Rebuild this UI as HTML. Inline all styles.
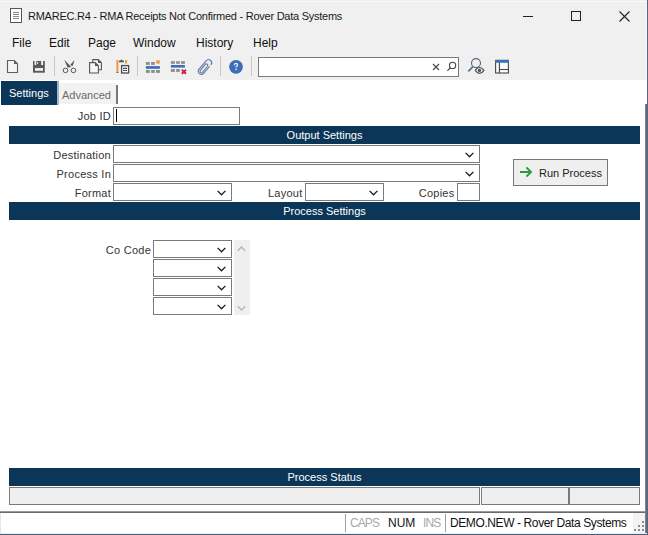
<!DOCTYPE html>
<html><head><meta charset="utf-8">
<style>
*{margin:0;padding:0;box-sizing:border-box}
html,body{width:648px;height:535px;overflow:hidden;background:#fff}
body{position:relative;font-family:"Liberation Sans",sans-serif;color:#222}
.a{position:absolute}
.t{position:absolute;white-space:pre;line-height:1}
#titlebar{left:0;top:0;width:648px;height:32px;background:#f0f0f0}
#menubar{left:0;top:32px;width:648px;height:23px;background:#f0f0f0}
#toolbar{left:0;top:55px;width:648px;height:25px;background:#f0f0f0}
.sep{position:absolute;top:56px;width:1px;height:20px;background:#c8c8c8}
.hdr{position:absolute;left:9px;width:631px;height:18px;background:#0c3657;color:#fff;font-size:11px;text-align:center;line-height:18px}
.lbl{position:absolute;font-size:11px;color:#333;text-align:right;white-space:pre;line-height:1;letter-spacing:0.25px;margin-right:-0.5px}
.inp{position:absolute;border:1px solid #7a7a7a;background:#fff;height:18px}
.chev{position:absolute;width:9px;height:6px}
.sf{position:absolute;top:487px;height:18px;border:1px solid #7a7a7a;background:#efefef}
</style></head><body>

<!-- window border -->
<div class="a" style="left:0;top:0;width:648px;height:1px;background:#5a6a80"></div>

<div id="titlebar" class="a"></div>
<div class="a" style="left:0;top:1px;width:646px;height:1px;background:#f8f8fb"></div>
<!-- doc icon -->
<svg class="a" style="left:10px;top:8px" width="13" height="16" viewBox="0 0 13 16">
 <rect x="0.5" y="0.5" width="11" height="14" fill="#fff" stroke="#555" stroke-width="1"/>
 <path d="M3 4.5H9M3 6.5H9M3 8.5H9M3 10.5H9" stroke="#888" stroke-width="1"/>
</svg>
<div class="t" style="left:28px;top:11px;font-size:11px;letter-spacing:-0.25px;color:#1a1a1a">RMAREC.R4 - RMA Receipts Not Confirmed - Rover Data Systems</div>
<!-- window controls -->
<div class="a" style="left:523px;top:16px;width:10px;height:1px;background:#222"></div>
<div class="a" style="left:571px;top:11px;width:10px;height:10px;border:1px solid #222"></div>
<svg class="a" style="left:619px;top:11px" width="11" height="11" viewBox="0 0 11 11"><path d="M0.5 0.5L10.5 10.5M10.5 0.5L0.5 10.5" stroke="#222" stroke-width="1.1"/></svg>

<div id="menubar" class="a"></div>
<div class="t" style="left:12px;top:37px;font-size:12px;color:#111">File</div>
<div class="t" style="left:49px;top:37px;font-size:12px;color:#111">Edit</div>
<div class="t" style="left:88px;top:37px;font-size:12px;color:#111">Page</div>
<div class="t" style="left:133px;top:37px;font-size:12px;color:#111">Window</div>
<div class="t" style="left:196px;top:37px;font-size:12px;color:#111">History</div>
<div class="t" style="left:253px;top:37px;font-size:12px;color:#111">Help</div>

<div id="toolbar" class="a"></div>
<!-- new -->
<svg class="a" style="left:6px;top:59px" width="14" height="15" viewBox="0 0 14 15">
 <path d="M1.5 1.5H8.3L11.5 4.7V13.5H1.5Z" fill="#f4f4f4" stroke="#5e5e5e" stroke-width="1.1"/>
 <path d="M8 1.2L11.8 5H8Z" fill="#5e5e5e"/>
</svg>
<!-- save -->
<svg class="a" style="left:32px;top:60px" width="14" height="14" viewBox="0 0 14 14">
 <rect x="1" y="1" width="11.8" height="11.7" fill="#5a5a5a"/>
 <rect x="2.5" y="1" width="1.7" height="4" fill="#f0f0f0"/>
 <rect x="9.1" y="1" width="2" height="4" fill="#f0f0f0"/>
 <rect x="4.9" y="2" width="1.2" height="1.7" fill="#f0f0f0"/>
 <rect x="3" y="8.1" width="8" height="2.7" fill="#f4f4f4"/>
</svg>
<div class="sep" style="left:54px"></div>
<!-- cut -->
<svg class="a" style="left:58px;top:56px" width="22" height="20" viewBox="0 0 22 20">
 <path d="M6.3 3.8L13.2 11L9.6 11.4Z" fill="#555"/>
 <path d="M16.6 4L14.6 9.9L12.2 8.9Z" fill="#555"/>
 <circle cx="7.5" cy="14.4" r="2.3" fill="none" stroke="#555" stroke-width="1"/>
 <circle cx="15.4" cy="14.4" r="2.3" fill="none" stroke="#555" stroke-width="1"/>
</svg>
<!-- copy -->
<svg class="a" style="left:85px;top:55px" width="22" height="21" viewBox="0 0 22 21">
 <path d="M7.8 4.6H13.2L16.4 7.8V14.8H7.8Z" fill="#f4f4f4" stroke="#555" stroke-width="1.1"/>
 <path d="M13 4.3L16.7 8H13Z" fill="#555"/>
 <path d="M4.6 7.6H10.2L13.4 10.8V18H4.6Z" fill="#f4f4f4" stroke="#555" stroke-width="1.1"/>
 <path d="M10 7.3L13.7 11H10Z" fill="#555"/>
</svg>
<!-- paste -->
<svg class="a" style="left:111px;top:55px" width="22" height="21" viewBox="0 0 22 21">
 <path d="M6.4 5V17.8" fill="none" stroke="#ee9a3a" stroke-width="2"/><rect x="5.4" y="17" width="2" height="0.9" fill="#6a6a6a"/>
 <path d="M15.1 5V8.6" fill="none" stroke="#ee9a3a" stroke-width="2"/>
 <path d="M8 7.3V6.1C8 5.6 8.5 5.4 9 5.4H9.6C9.9 4.6 10.3 4.4 10.5 4.4C10.8 4.4 11.2 4.6 11.4 5.4H12.2C12.7 5.4 13 5.7 13 6.1V7.3Z" fill="#555"/>
 <rect x="10.6" y="10.6" width="7" height="7.4" fill="#fafafa" stroke="#4a4a4a" stroke-width="1.3"/>
 <path d="M12 13.4H16M12 15.5H16" stroke="#4a4a4a" stroke-width="1.1"/>
</svg>
<div class="sep" style="left:137px"></div>
<!-- insert row -->
<svg class="a" style="left:141px;top:55px" width="22" height="22" viewBox="0 0 22 22">
 <rect x="4.9" y="7" width="3.9" height="2.9" fill="#8e8e8e"/><rect x="10.1" y="7" width="3.7" height="2.9" fill="#8e8e8e"/>
 <circle cx="17" cy="7" r="2.1" fill="#eea040"/>
 <rect x="4.9" y="11.1" width="14" height="2.7" fill="#3f6fb5"/>
 <rect x="4.9" y="15" width="3.9" height="2.9" fill="#8e8e8e"/><rect x="10.1" y="15" width="3.7" height="2.9" fill="#8e8e8e"/><rect x="15" y="15" width="3.9" height="2.9" fill="#8e8e8e"/>
</svg>
<!-- delete row -->
<svg class="a" style="left:166px;top:55px" width="22" height="22" viewBox="0 0 22 22">
 <rect x="4.9" y="6.2" width="3.9" height="2.6" fill="#8e8e8e"/><rect x="10.1" y="6.2" width="3.7" height="2.6" fill="#8e8e8e"/><rect x="15" y="6.2" width="3.9" height="2.6" fill="#8e8e8e"/>
 <rect x="4.9" y="10" width="14" height="2.6" fill="#3f6fb5"/>
 <rect x="4.9" y="14" width="3.9" height="2.9" fill="#8e8e8e"/><rect x="10.1" y="14" width="3.7" height="2.9" fill="#8e8e8e"/>
 <path d="M15.8 14.8L20 18.8M20 14.8L15.8 18.8" stroke="#d0203a" stroke-width="1.9"/>
</svg>
<!-- paperclip -->
<svg class="a" style="left:193px;top:55px" width="25" height="22" viewBox="0 0 25 22">
 <g transform="translate(12 12) rotate(-50)">
  <path d="M3.6 3.1H-5.5A3.1 3.1 0 0 1 -5.5 -3.1H5.5A3.1 3.1 0 0 1 5.5 3.1" fill="#e4f0fb" stroke="#5f7598" stroke-width="1.1"/>
  <rect x="-6.9" y="-1.4" width="10.5" height="2.8" rx="1.4" fill="#eaf4fd" stroke="#5f7598" stroke-width="1"/>
 </g>
</svg>
<div class="sep" style="left:220px"></div>
<!-- help -->
<svg class="a" style="left:224px;top:55px" width="25" height="22" viewBox="0 0 25 22">
 <circle cx="12" cy="11.8" r="6.9" fill="#3f6db3"/>
 <path d="M10.4 10.2C10.4 9 11.1 8.4 12 8.4C12.9 8.4 13.6 9 13.6 9.8C13.6 10.9 12.1 11 12.1 12.6" fill="none" stroke="#d8f2ff" stroke-width="1.3"/>
 <rect x="11.35" y="13.7" width="1.5" height="1.5" fill="#d8f2ff"/>
</svg>
<div class="sep" style="left:251px"></div>
<!-- search box -->
<div class="a" style="left:258px;top:57px;width:201px;height:20px;border:1px solid #7a7a7a;background:#fff"></div>
<svg class="a" style="left:432px;top:63px" width="8" height="8" viewBox="0 0 8 8"><path d="M1 1L7 7M7 1L1 7" stroke="#444" stroke-width="1.1"/></svg>
<svg class="a" style="left:446px;top:60px" width="12" height="13" viewBox="0 0 12 13"><circle cx="6.6" cy="5.4" r="3.1" fill="none" stroke="#444" stroke-width="1.1"/><path d="M4.4 7.7L1.4 10.9" stroke="#444" stroke-width="1.2"/></svg>
<!-- find eye -->
<svg class="a" style="left:464px;top:55px" width="25" height="22" viewBox="0 0 25 22">
 <circle cx="12" cy="8.1" r="4.5" fill="none" stroke="#56647c" stroke-width="1.1"/>
 <path d="M8.9 11.6L4.3 16.3" stroke="#5a7090" stroke-width="1.8"/>
 <path d="M11.3 15.4C12.5 13.4 14 12.5 15.6 12.5C17.2 12.5 18.7 13.4 19.9 15.4C18.7 17.4 17.2 18.3 15.6 18.3C14 18.3 12.5 17.4 11.3 15.4Z" fill="#f8f8f8" stroke="#505050" stroke-width="1.2"/>
 <circle cx="15.5" cy="15.4" r="1.7" fill="#505050"/>
</svg>
<!-- layout -->
<svg class="a" style="left:490px;top:55px" width="25" height="22" viewBox="0 0 25 22">
 <rect x="5.6" y="5.4" width="12.8" height="12.6" fill="#fafafa" stroke="#454545" stroke-width="1.1"/>
 <rect x="5.1" y="4.9" width="13.8" height="2.9" fill="#3a70b8"/>
 <path d="M9.4 7.8V18M9.4 14.5H18.4" stroke="#454545" stroke-width="1.1"/>
</svg>

<!-- tabs -->
<div class="a" style="left:1px;top:81px;width:56px;height:24px;background:#0c3657"></div>
<div class="t" style="left:9px;top:88px;font-size:11px;color:#fff">Settings</div>
<div class="a" style="left:57px;top:81px;width:2px;height:24px;background:#a8b4c0"></div>
<div class="a" style="left:59px;top:83px;width:57px;height:21px;background:#f2f2f2"></div>
<div class="t" style="left:62px;top:90px;font-size:11px;color:#6a6a6a">Advanced</div>
<div class="a" style="left:116px;top:85px;width:2px;height:19px;background:#777"></div>

<!-- Job ID -->
<div class="lbl" style="right:537.5px;top:111px">Job ID</div>
<div class="inp" style="left:113px;top:107px;width:127px;height:18px"></div>
<div class="a" style="left:116px;top:109px;width:1px;height:13px;background:#000"></div>

<div class="hdr" style="top:126px">Output Settings</div>

<div class="lbl" style="right:537.5px;top:150px">Destination</div>
<div class="inp" style="left:113px;top:145px;width:367px"></div>
<div class="lbl" style="right:537.5px;top:169px">Process In</div>
<div class="inp" style="left:113px;top:164px;width:367px"></div>
<div class="lbl" style="right:537.5px;top:188px">Format</div>
<div class="inp" style="left:113px;top:183px;width:119px"></div>
<div class="lbl" style="right:346px;top:188px">Layout</div>
<div class="inp" style="left:305px;top:183px;width:79px"></div>
<div class="lbl" style="right:194px;top:188px">Copies</div>
<div class="inp" style="left:457px;top:183px;width:23px"></div>

<svg class="chev" style="left:465px;top:152px" viewBox="0 0 9 6"><path d="M0.6 0.9L4.5 4.8L8.4 0.9" fill="none" stroke="#1a1a1a" stroke-width="1.3"/></svg>
<svg class="chev" style="left:465px;top:171px" viewBox="0 0 9 6"><path d="M0.6 0.9L4.5 4.8L8.4 0.9" fill="none" stroke="#1a1a1a" stroke-width="1.3"/></svg>
<svg class="chev" style="left:217px;top:190px" viewBox="0 0 9 6"><path d="M0.6 0.9L4.5 4.8L8.4 0.9" fill="none" stroke="#1a1a1a" stroke-width="1.3"/></svg>
<svg class="chev" style="left:369px;top:190px" viewBox="0 0 9 6"><path d="M0.6 0.9L4.5 4.8L8.4 0.9" fill="none" stroke="#1a1a1a" stroke-width="1.3"/></svg>

<!-- run process button -->
<div class="a" style="left:513px;top:159px;width:95px;height:27px;border:1px solid #777;background:#efefef"></div>
<svg class="a" style="left:519px;top:166px" width="14" height="12" viewBox="0 0 14 12"><path d="M1 6H12M7.5 1.5L12 6L7.5 10.5" fill="none" stroke="#2a9a3a" stroke-width="1.8"/></svg>
<div class="t" style="left:539px;top:168px;font-size:11px;color:#222">Run Process</div>

<div class="hdr" style="top:202px">Process Settings</div>

<!-- Co Code -->
<div class="lbl" style="right:497.5px;top:245px">Co Code</div>
<div class="inp" style="left:153px;top:240px;width:79px"></div>
<div class="inp" style="left:153px;top:259px;width:79px"></div>
<div class="inp" style="left:153px;top:278px;width:79px"></div>
<div class="inp" style="left:153px;top:297px;width:79px"></div>
<svg class="chev" style="left:217px;top:247px" viewBox="0 0 9 6"><path d="M0.6 0.9L4.5 4.8L8.4 0.9" fill="none" stroke="#1a1a1a" stroke-width="1.3"/></svg>
<svg class="chev" style="left:217px;top:266px" viewBox="0 0 9 6"><path d="M0.6 0.9L4.5 4.8L8.4 0.9" fill="none" stroke="#1a1a1a" stroke-width="1.3"/></svg>
<svg class="chev" style="left:217px;top:285px" viewBox="0 0 9 6"><path d="M0.6 0.9L4.5 4.8L8.4 0.9" fill="none" stroke="#1a1a1a" stroke-width="1.3"/></svg>
<svg class="chev" style="left:217px;top:304px" viewBox="0 0 9 6"><path d="M0.6 0.9L4.5 4.8L8.4 0.9" fill="none" stroke="#1a1a1a" stroke-width="1.3"/></svg>
<div class="a" style="left:234px;top:240px;width:16px;height:75px;background:#efefef"></div>
<svg class="chev" style="left:237px;top:246px" viewBox="0 0 9 6"><path d="M0.8 4.8L4.5 1.1L8.2 4.8" fill="none" stroke="#b4b4b4" stroke-width="1.4"/></svg>
<svg class="chev" style="left:237px;top:305px" viewBox="0 0 9 6"><path d="M0.8 1.2L4.5 4.9L8.2 1.2" fill="none" stroke="#b4b4b4" stroke-width="1.4"/></svg>

<!-- process status -->
<div class="hdr" style="top:468px">Process Status</div>
<div class="sf" style="left:9px;width:471px"></div>
<div class="sf" style="left:481px;width:88px"></div>
<div class="sf" style="left:569px;width:71px"></div>

<!-- window right border -->
<div class="a" style="left:646px;top:1px;width:1px;height:79px;background:#f5f7fc"></div>
<div class="a" style="left:645px;top:104px;width:1px;height:429px;background:#7a8298"></div>
<div class="a" style="left:646px;top:104px;width:1px;height:429px;background:#606a82"></div>
<div class="a" style="left:647px;top:0;width:1px;height:535px;background:#5a6580"></div>
<!-- status bar -->
<div class="a" style="left:0;top:511px;width:645px;height:1px;background:#9a9a9a"></div>
<div class="a" style="left:0;top:512px;width:645px;height:1px;background:#6a6a6a"></div>
<div class="a" style="left:633px;top:513px;width:12px;height:20px;background:#f3f3f3"></div>
<div class="a" style="left:0;top:513px;width:1px;height:20px;background:#e6e6e6"></div>
<div class="a" style="left:345px;top:514px;width:1px;height:18px;background:#a0a0a0"></div>
<div class="t" style="left:350px;top:517px;font-size:12px;letter-spacing:-0.9px;color:#a8a8a8">CAPS</div>
<div class="t" style="left:388px;top:517px;font-size:12px;color:#111">NUM</div>
<div class="t" style="left:423px;top:517px;font-size:12px;letter-spacing:-0.9px;color:#a8a8a8">INS</div>
<div class="a" style="left:445px;top:514px;width:1px;height:18px;background:#a0a0a0"></div>
<div class="t" style="left:450px;top:517px;font-size:12px;letter-spacing:-0.4px;color:#111">DEMO.NEW - Rover Data Systems</div>
<svg class="a" style="left:634px;top:521px" width="10" height="10" viewBox="0 0 10 10">
 <rect x="8" y="0" width="2" height="2" fill="#8c8c8c"/>
 <rect x="4" y="4" width="2" height="2" fill="#8c8c8c"/><rect x="8" y="4" width="2" height="2" fill="#8c8c8c"/>
 <rect x="0" y="8" width="2" height="2" fill="#8c8c8c"/><rect x="4" y="8" width="2" height="2" fill="#8c8c8c"/><rect x="8" y="8" width="2" height="2" fill="#8c8c8c"/>
</svg>
<div class="a" style="left:0;top:533px;width:647px;height:1px;background:#e8ecf4"></div>
<div class="a" style="left:0;top:534px;width:648px;height:1px;background:#4e5c78"></div>

</body></html>
